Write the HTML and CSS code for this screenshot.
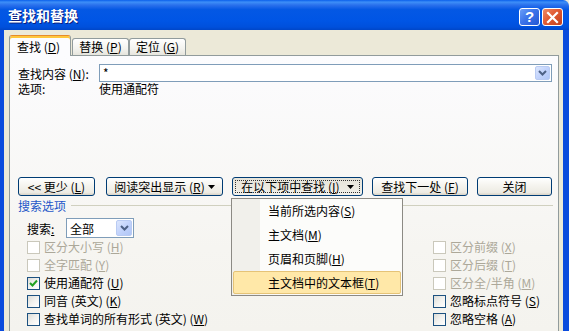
FILE: index.html
```html
<!DOCTYPE html>
<html lang="zh">
<head>
<meta charset="utf-8">
<title>查找和替换</title>
<link rel="stylesheet" href="styles.css">
</head>
<body>
<div class="window">
  <div class="titlebar">
    <span class="title">查找和替换</span>
    <div class="tb-btns">
      <span class="tb help">?</span>
      <span class="tb close"><svg width="13" height="13" viewBox="0 0 13 13"><path d="M2 2 L11 11 M11 2 L2 11" stroke="#fff" stroke-width="2.2" stroke-linecap="square"/></svg></span>
    </div>
  </div>
  <div class="frame">
    <div class="tabs">
      <div class="tab active t1">查找 (<u>D</u>)</div>
      <div class="tab t2">替换 (<u>P</u>)</div>
      <div class="tab t3">定位 (<u>G</u>)</div>
    </div>
    <div class="panel">
      <div class="row find-row">
        <span class="lbl">查找内容 (<u>N</u>):</span>
        <div class="combo">
          <span class="combo-text">*</span>
          <span class="arrow"><svg width="9" height="6" viewBox="0 0 9 6"><path d="M1 1 L4.5 4.5 L8 1" fill="none" stroke="#4D6185" stroke-width="2"/></svg></span>
        </div>
      </div>
      <div class="row opt-row">
        <span class="lbl">选项:</span>
        <span>使用通配符</span>
      </div>
      <div class="btn-row">
        <span class="btn b1">&lt;&lt; 更少 (<u>L</u>)</span>
        <span class="btn b2">阅读突出显示 (<u>R</u>)<svg class="tri2" width="7" height="4" viewBox="0 0 7 4"><path d="M0 0 H7 L3.5 4 Z" fill="#000"/></svg></span>
        <span class="btn b3 pressed"><span class="focus">在以下项中查找 (<u>I</u>)<svg class="tri3" width="7" height="4" viewBox="0 0 7 4"><path d="M0 0 H7 L3.5 4 Z" fill="#000"/></svg></span></span>
        <span class="btn b4">查找下一处 (<u>F</u>)</span>
        <span class="btn b5">关闭</span>
      </div>
      <div class="group-head">
        <span class="group-title">搜索选项</span>
        <span class="group-line"></span>
      </div>
      <div class="search-row">
        <span class="search-lbl">搜索<u>:</u></span>
        <div class="select">
          <span class="select-text">全部</span>
          <span class="arrow"><svg width="9" height="6" viewBox="0 0 9 6"><path d="M1 1 L4.5 4.5 L8 1" fill="none" stroke="#4D6185" stroke-width="2"/></svg></span>
        </div>
      </div>
      <div class="checks">
        <div class="col">
          <div class="chk disabled"><span class="box"></span>区分大小写 (<u>H</u>)</div>
          <div class="chk disabled"><span class="box"></span>全字匹配 (<u>Y</u>)</div>
          <div class="chk"><span class="box"><svg width="9" height="9" viewBox="0 0 9 9"><path d="M1 4 L3.5 6.5 L8 1.5" fill="none" stroke="#21A121" stroke-width="2"/></svg></span>使用通配符 (<u>U</u>)</div>
          <div class="chk"><span class="box"></span>同音 (英文) (<u>K</u>)</div>
          <div class="chk"><span class="box"></span>查找单词的所有形式 (英文) (<u>W</u>)</div>
        </div>
        <div class="col">
          <div class="chk disabled"><span class="box"></span>区分前缀 (<u>X</u>)</div>
          <div class="chk disabled"><span class="box"></span>区分后缀 (<u>T</u>)</div>
          <div class="chk disabled"><span class="box"></span>区分全/半角 (<u>M</u>)</div>
          <div class="chk"><span class="box"></span>忽略标点符号 (<u>S</u>)</div>
          <div class="chk"><span class="box"></span>忽略空格 (<u>A</u>)</div>
        </div>
      </div>
    </div>
  </div>
</div>
<div class="menu">
  <div class="item">当前所选内容(<u>S</u>)</div>
  <div class="item">主文档(<u>M</u>)</div>
  <div class="item">页眉和页脚(<u>H</u>)</div>
  <div class="item hot">主文档中的文本框(<u>T</u>)</div>
</div>
</body>
</html>
```
FILE: styles.css
```css
* { box-sizing: border-box; }
html, body { margin: 0; padding: 0; }
body {
  width: 569px;
  height: 331px;
  overflow: hidden;
  position: relative;
  font-family: "Noto Sans CJK SC", "Liberation Sans", sans-serif;
  font-size: 12px;
  color: #000;
  background: #ECE9D8;
}
u { text-decoration: underline; text-underline-offset: 1px; }

.window {
  height: 331px;
  display: flex;
  flex-direction: column;
}

.titlebar {
  height: 30px;
  flex: none;
  display: flex;
  align-items: flex-start;
  justify-content: space-between;
  padding: 0 6px 0 8px;
  background: linear-gradient(to bottom, #0A5FEB 0%, #3D8FF8 7%, #2A70EC 17%, #0458E4 32%, #0055E5 70%, #0050DC 90%, #0046C8 100%);
  border-top-right-radius: 6px;
}
.title {
  color: #fff;
  font-weight: bold;
  font-size: 14px;
  line-height: 30px;
  text-shadow: 1px 1px 0 #0A1F80;
}
.tb-btns {
  display: flex;
  gap: 2px;
  margin-top: 8px;
}
.tb {
  width: 21px;
  height: 18px;
  border: 1px solid #fff;
  border-radius: 3px;
  display: flex;
  align-items: center;
  justify-content: center;
  color: #fff;
}
.help {
  background: linear-gradient(135deg, #6A9EF8 0%, #3C74EA 45%, #2456D3 100%);
  font-family: "Liberation Sans", sans-serif;
  font-weight: bold;
  font-size: 15px;
  line-height: 16px;
}
.close {
  background: linear-gradient(135deg, #F08A66 0%, #E05A33 45%, #C4401C 100%);
}

.frame {
  flex: 1;
  display: flex;
  flex-direction: column;
  background: #ECE9D8;
  border-left: 4px solid #0A4BDD;
  border-right: 6px solid #0A4BDD;
  padding: 5px 4px 0 5px;
  min-height: 0;
}

.tabs {
  height: 20px;
  flex: none;
  display: flex;
  align-items: flex-end;
  position: relative;
  z-index: 1;
}
.tab {
  height: 17px;
  border: 1px solid #919B9C;
  border-bottom: none;
  border-radius: 3px 3px 0 0;
  background: linear-gradient(#FFFFFF, #F3F3EF 60%, #E6E5DD);
  display: flex;
  align-items: center;
  justify-content: center;
  line-height: 14px;
  white-space: nowrap;
}
.tab.active {
  height: 21px;
  margin-bottom: -1px;
  background: #FCFCFE;
  border-top: 1px solid #E68B2C;
  box-shadow: inset 0 2px 0 #FFC73C;
  padding-top: 1px;
  padding-right: 3px;
}
.t1 { width: 62px; }
.t2 { width: 57px; margin-left: 1px; }
.t3 { width: 57px; margin-left: 0; }

.panel {
  flex: 1;
  border: 1px solid #919B9C;
  border-bottom: none;
  background: linear-gradient(#FCFCFE, #F6F5F1 70%, #F4F3EE);
  padding: 8px 6px 0 8px;
  min-height: 0;
}

.row { display: flex; align-items: center; }
.lbl { width: 81px; flex: none; white-space: nowrap; }
.find-row { height: 18px; }
.combo {
  width: 453px;
  height: 18px;
  border: 1px solid #7F9DB9;
  background: #fff;
  display: flex;
  align-items: center;
  justify-content: space-between;
  padding: 0 1px 0 3px;
}
.combo-text { line-height: 14px; }
.arrow {
  width: 15px;
  height: 14px;
  border: 1px solid #B9CBF3;
  border-radius: 2px;
  background: linear-gradient(135deg, #DCE6FD 0%, #C2D3FC 50%, #B0C6F6 100%);
  display: flex;
  align-items: center;
  justify-content: center;
}
.opt-row { height: 14px; line-height: 14px; }

.btn-row {
  display: flex;
  margin-top: 81px;
  height: 19px;
}
.btn {
  height: 19px;
  border: 1px solid #003C74;
  border-radius: 3px;
  background: linear-gradient(#FFFFFF 0%, #F6F5F0 40%, #EDEBE3 85%, #D8D2C6 100%);
  display: flex;
  align-items: center;
  justify-content: center;
  line-height: 14px;
  white-space: nowrap;
}
.b1 { width: 77px; }
.b2 { width: 117px; margin-left: 11px; }
.b3 { width: 131px; margin-left: 9px; }
.b4 { width: 96px; margin-left: 9px; }
.b5 { width: 75px; margin-left: 9px; }
.pressed {
  background: linear-gradient(#E6E4DA, #ECEAE1 60%, #F2F1EC);
  padding: 2px;
}
.focus {
  flex: 1;
  align-self: stretch;
  border: 1px dotted #333;
  display: flex;
  align-items: center;
  justify-content: center;
}
.tri2 { margin-left: 3px; }
.tri3 { margin-left: 7px; }

.group-head {
  display: flex;
  align-items: center;
  margin-top: 3px;
  height: 13px;
}
.group-title { color: #1E56C8; line-height: 13px; }
.group-line {
  flex: 1;
  height: 1px;
  background: #D0D0BF;
  margin-left: 5px;
  margin-right: -1px;
}

.search-row {
  display: flex;
  align-items: center;
  margin-top: 6px;
  padding-left: 9px;
  height: 20px;
}
.search-lbl { width: 39px; }
.select {
  width: 68px;
  height: 20px;
  border: 1px solid #7F9DB9;
  background: #fff;
  display: flex;
  align-items: center;
  justify-content: space-between;
  padding: 0 1px 0 3px;
}
.select .arrow { height: 16px; width: 16px; }

.checks {
  display: grid;
  grid-template-columns: 406px 1fr;
  padding-left: 9px;
}
.chk {
  height: 18px;
  display: flex;
  align-items: center;
  white-space: nowrap;
  line-height: 14px;
}
.box {
  width: 13px;
  height: 13px;
  border: 1px solid #1C5180;
  background: linear-gradient(135deg, #DCDCD7 0%, #F2F2EF 50%, #FFFFFF 100%);
  margin-right: 4px;
  flex: none;
  display: flex;
  align-items: center;
  justify-content: center;
}
.chk.disabled { color: #ACA899; }
.chk.disabled .box { border-color: #CAC8BB; background: #fff; }

.menu {
  position: absolute;
  left: 231px;
  top: 198px;
  width: 172px;
  height: 98px;
  border: 1px solid #8C8A84;
  background: linear-gradient(to right, #F1F0EB 0, #F1F0EB 28px, #FCFCFA 28px);
  padding: 0 1px;
  z-index: 5;
}
.item {
  height: 24px;
  line-height: 24px;
  padding-left: 35px;
  white-space: nowrap;
}
.item.hot {
  height: 23px;
  line-height: 21px;
  background: #FFE8A8;
  border: 1px solid #E5C377;
  border-radius: 2px;
  padding-left: 34px;
}
```
